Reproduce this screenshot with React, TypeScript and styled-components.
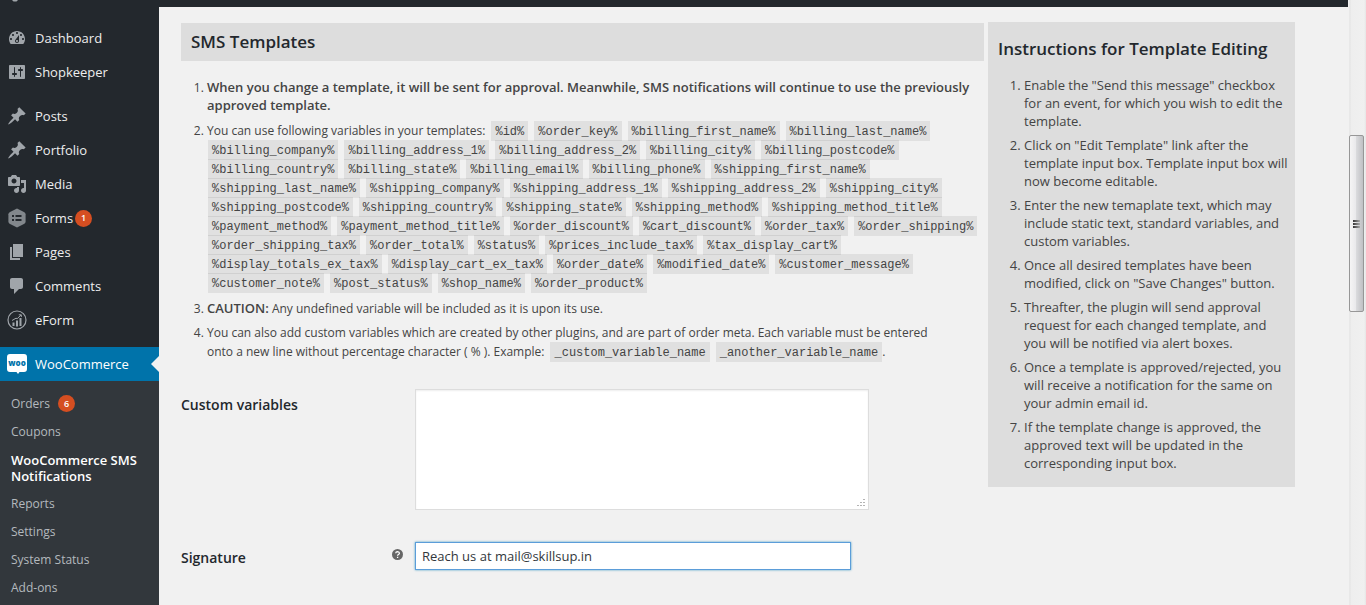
import React from "react";
import styled, { createGlobalStyle } from "styled-components";

const GlobalStyle = createGlobalStyle`
  * { box-sizing: border-box; }
  body {
    margin: 0;
    background: #f1f1f1;
    color: #444;
    font-family: "Open Sans", "Noto Sans", sans-serif;
    font-size: 13px;
    line-height: 18px;
  }
`;

const Page = styled.div`
  display: flex;
  height: 100vh;
  overflow: hidden;
`;

const Sidebar = styled.nav`
  flex: none;
  width: 159px;
  padding-top: 21px;
  background: #23282d;
  position: relative;
`;

const ClippedIcon = styled.svg`
  position: absolute;
  top: 0;
  left: 12px;
`;

const Menu = styled.ul`
  list-style: none;
  margin: 0 0 10px;
  padding: 0;
`;

const MenuLink = styled.a<{ $current?: boolean }>`
  display: flex;
  align-items: center;
  height: 34px;
  padding-left: 7px;
  gap: 8px;
  position: relative;
  font-size: 13px;
  text-decoration: none;
  color: ${(p) => (p.$current ? "#fff" : "#eee")};
  background: ${(p) => (p.$current ? "#0073aa" : "transparent")};
`;

const Arrow = styled.span`
  position: absolute;
  right: 0;
  top: 9px;
  border: 8px solid transparent;
  border-left-width: 0;
  border-right-color: #f1f1f1;
`;

const Badge = styled.span<{ $spaced?: boolean }>`
  display: inline-flex;
  align-items: center;
  justify-content: center;
  width: 17px;
  height: 17px;
  margin-left: ${(p) => (p.$spaced ? "8px" : "-6px")};
  border-radius: 50%;
  background: #d54e21;
  color: #fff;
  font-size: 9px;
  font-weight: 600;
`;

const SubMenu = styled.ul`
  list-style: none;
  margin: -10px 0 0;
  padding: 8px 0 40px;
  background: #32373c;
`;

const SubLink = styled.a<{ $current?: boolean }>`
  display: flex;
  align-items: center;
  padding: 6px 12px 6px 11px;
  font-size: ${(p) => (p.$current ? "13px" : "12px")};
  line-height: 16px;
  text-decoration: none;
  font-weight: ${(p) => (p.$current ? 600 : 400)};
  color: ${(p) => (p.$current ? "#fff" : "#b4b9be")};
`;

const Body = styled.div`
  flex: 1;
  min-width: 0;
`;

const AdminBar = styled.header`
  height: 7px;
  background: #23282d;
`;

const Content = styled.main`
  display: grid;
  grid-template-columns: minmax(0, 1fr) 307px;
  gap: 4px;
  align-items: start;
  padding: 15px 53px 0 22px;
`;

const Templates = styled.section`
  padding-top: 1px;
`;

const Title = styled.h2`
  margin: 0;
  color: #23282d;
  font-size: 17px;
  line-height: 18px;
  font-weight: 600;
`;

const SectionTitle = styled(Title)`
  padding: 10px;
  background: #ddd;
`;

const NumberedList = styled.ol`
  margin: 18px 0 0;
  padding: 0 0 0 26px;

  li { margin-bottom: 6px; }
`;

const Notes = styled(NumberedList)`
  font-size: 12px;

  strong {
    font-size: 13px;
    font-weight: 600;
    line-height: 16px;
  }
`;

const CodeLine = styled.span`
  display: flex;
  align-items: center;
  gap: 6px;
  height: 19px;
  white-space: nowrap;
`;

const Code = styled.code`
  display: inline-block;
  flex: none;
  height: 20px;
  padding: 2px 4px 0;
  background: rgba(0, 0, 0, 0.07);
  font-family: "Liberation Mono", monospace;
  font-size: 12px;
`;

const CodeBlock = styled.div`
  padding: 0 0 2px 1px;
`;

const Field = styled.div`
  display: grid;
  grid-template-columns: 234px minmax(0, 1fr);
  align-items: start;
`;

const FieldHead = styled.div`
  display: flex;
  justify-content: space-between;
  padding: 7px 12px 0 0;
  color: #23282d;
`;

const FieldLabel = styled.label`
  font-size: 14px;
  font-weight: 600;
`;

const TextArea = styled.textarea`
  width: 454px;
  max-width: 100%;
  height: 121px;
  border: 1px solid #ddd;
  background: #fff;
  box-shadow: inset 0 1px 2px rgba(0, 0, 0, 0.07);

  &::-webkit-resizer {
    background-color: #fff;
    background-image:
      linear-gradient(#b4b4b4, #b4b4b4), linear-gradient(#b4b4b4, #b4b4b4), linear-gradient(#b4b4b4, #b4b4b4),
      linear-gradient(#b4b4b4, #b4b4b4), linear-gradient(#b4b4b4, #b4b4b4), linear-gradient(#b4b4b4, #b4b4b4);
    background-repeat: no-repeat;
    background-size: 2px 1px;
    background-position:
      right 3px bottom 3px, right 3px bottom 6px, right 3px bottom 9px,
      right 6px bottom 3px, right 6px bottom 6px, right 9px bottom 3px;
  }
`;

const TextInput = styled.input`
  width: 436px;
  max-width: 100%;
  height: 28px;
  padding: 3px 6px;
  border: 1px solid #5b9dd9;
  background: #fff;
  box-shadow: 0 0 2px rgba(30, 140, 190, 0.8);
  color: #32373c;
  font: inherit;
  outline: none;
`;

const Form = styled.form`
  display: grid;
  gap: 32px;
  margin-top: 28px;
`;

const Instructions = styled.aside`
  padding: 18px 4px 9px 10px;
  background: #ddd;
`;

const Scrollbar = styled.div`
  flex: none;
  width: 18px;
  padding: 135px 2px 0 1px;
  background: linear-gradient(to right, #f6f6f6 0, #e3e3e3 2px, #eeeeee 3px, #f0f0f0 16px, #e6e6e6 18px);
`;

const Thumb = styled.div`
  display: flex;
  flex-direction: column;
  align-items: center;
  justify-content: center;
  gap: 1px;
  height: 177px;
  border: 1px solid #979797;
  border-radius: 2px;
  background: linear-gradient(to right, #f5f5f5 0, #e9e9eb 45%, #d9dadc 50%, #c0c0c4 100%);
`;

const Grip = styled.span`
  width: 7px;
  height: 2px;
  background: linear-gradient(to right, #333, #aaa);
`;

const DASH = {
  dashboard:
    "M3.76 16h12.48c1.1-1.37 1.76-3.11 1.76-5 0-4.42-3.58-8-8-8s-8 3.58-8 8c0 1.89.66 3.63 1.76 5zM10 4c.55 0 1 .45 1 1s-.45 1-1 1-1-.45-1-1 .45-1 1-1zM6 6c.55 0 1 .45 1 1s-.45 1-1 1-1-.45-1-1 .45-1 1-1zm8 0c.55 0 1 .45 1 1s-.45 1-1 1-1-.45-1-1 .45-1 1-1zm-5.37 5.55L12 7v6c0 1.1-.9 2-2 2s-2-.9-2-2c0-.57.24-1.08.63-1.45zM4 10c.55 0 1 .45 1 1s-.45 1-1 1-1-.45-1-1 .45-1 1-1zm12 0c.55 0 1 .45 1 1s-.45 1-1 1-1-.45-1-1 .45-1 1-1zm-5 3c0-.55-.45-1-1-1s-1 .45-1 1 .45 1 1 1 1-.45 1-1z",
  settings:
    "M18 16V4c0-.55-.45-1-1-1H3c-.55 0-1 .45-1 1v12c0 .55.45 1 1 1h14c.55 0 1-.45 1-1zM8 11h1c.55 0 1 .45 1 1s-.45 1-1 1H8v1.5c0 .28-.22.5-.5.5s-.5-.22-.5-.5V13H6c-.55 0-1-.45-1-1s.45-1 1-1h1V5.5c0-.28.22-.5.5-.5s.5.22.5.5V11zm5-2h-1c-.55 0-1-.45-1-1s.45-1 1-1h1V5.5c0-.28.22-.5.5-.5s.5.22.5.5V7h1c.55 0 1 .45 1 1s-.45 1-1 1h-1v5.5c0 .28-.22.5-.5.5s-.5-.22-.5-.5V9z",
  pin: "M10.44 3.02l1.82-1.82 6.36 6.35-1.83 1.82c-1.05-.68-2.48-.57-3.41.36l-.75.75c-.92.93-1.04 2.35-.35 3.41l-1.83 1.82-2.41-2.41-2.8 2.79c-.42.42-3.38 2.71-3.8 2.29s1.86-3.39 2.28-3.81l2.79-2.79L4.1 9.36l1.83-1.82c1.05.69 2.48.57 3.4-.36l.75-.75c.93-.92 1.05-2.35.36-3.41z",
  media:
    "M13 11V4c0-.55-.45-1-1-1h-1.67L9 1H5L3.67 3H2c-.55 0-1 .45-1 1v7c0 .55.45 1 1 1h10c.55 0 1-.45 1-1zM7 4.5c1.38 0 2.5 1.12 2.5 2.5S8.38 9.5 7 9.5 4.5 8.38 4.5 7 5.62 4.5 7 4.5zM14 6h5v10.5c0 1.38-1.12 2.5-2.5 2.5S14 17.88 14 16.5s1.12-2.5 2.5-2.5c.17 0 .34.02.5.05V9h-3V6zm-4 8.05V13h2v3.5c0 1.38-1.12 2.5-2.5 2.5S7 17.88 7 16.5 8.12 14 9.5 14c.17 0 .34.02.5.05z",
  page: "M6 15V2h10v13H6zm-1 1h8v2H3V5h2v11z",
  comment: "M5 2h9c1.1 0 2 .9 2 2v7c0 1.1-.9 2-2 2h-2l-5 5v-5H5c-1.1 0-2-.9-2-2V4c0-1.1.9-2 2-2z",
};

const Dashicon = ({ name }: { name: keyof typeof DASH }) => (
  <svg width="20" height="20" viewBox="0 0 20 20" fill="#a0a5aa" fillRule="evenodd" aria-hidden="true">
    <path d={DASH[name]} />
  </svg>
);

const FormsIcon = () => (
  <svg width="20" height="20" viewBox="0 0 20 20" aria-hidden="true">
    <path d="M10 0.5l7.4 3.8q1.2.8 1.2 2v7.4q0 1.2-1.2 2L10 19.5l-7.4-3.8q-1.2-.8-1.2-2V6.3q0-1.2 1.2-2z" fill="#82878c" />
    <path d="M5 7h2v2H5zM8.5 7h6v2h-6zM5 11h2v2H5zM8.5 11h6v2h-6z" fill="#23282d" />
  </svg>
);

const EFormIcon = () => (
  <svg width="20" height="20" viewBox="0 0 20 20" fill="none" aria-hidden="true">
    <circle cx="10" cy="10" r="9" stroke="#a0a5aa" strokeWidth="1.2" />
    <path d="M5.5 12.5h2V16h-2zM9 10.5h2V16.5H9zM12.5 8h2v8h-2z" fill="#a0a5aa" />
    <path d="M5 10.5l4-2.3 1.2.5L14 5M11.8 4.8H14.3V7" stroke="#a0a5aa" />
  </svg>
);

const WooIcon = () => (
  <svg width="20" height="20" viewBox="0 0 20 20" aria-hidden="true">
    <path d="M3 0h14q3 0 3 3v12q0 3-3 3h-4.5l-1.5 2-1.5-2H3q-3 0-3-3V3q0-3 3-3z" fill="#fff" />
    <text x="10" y="12" textAnchor="middle" fontSize="8" fontWeight="800" fill="#0073aa">
      woo
    </text>
  </svg>
);

const HelpIcon = () => (
  <svg width="11" height="11" viewBox="0 0 11 11" role="img" aria-label="Help">
    <circle cx="5.5" cy="5.5" r="5.5" fill="#666" />
    <path d="M3.7 4.3q.1-1.7 1.9-1.7 1.8.1 1.8 1.6 0 .8-1 1.3-.8.4-.8 1.2M5.6 7.7v1.3" stroke="#fff" strokeWidth="1.3" fill="none" />
  </svg>
);

const MAIN_MENU: { label: string; icon: React.ReactNode; count?: number }[][] = [
  [
    { label: "Dashboard", icon: <Dashicon name="dashboard" /> },
    { label: "Shopkeeper", icon: <Dashicon name="settings" /> },
  ],
  [
    { label: "Posts", icon: <Dashicon name="pin" /> },
    { label: "Portfolio", icon: <Dashicon name="pin" /> },
    { label: "Media", icon: <Dashicon name="media" /> },
    { label: "Forms", icon: <FormsIcon />, count: 1 },
    { label: "Pages", icon: <Dashicon name="page" /> },
    { label: "Comments", icon: <Dashicon name="comment" /> },
    { label: "eForm", icon: <EFormIcon /> },
  ],
];

const SUB_MENU: { label: string; count?: number; current?: boolean }[] = [
  { label: "Orders", count: 6 },
  { label: "Coupons" },
  { label: "WooCommerce SMS Notifications", current: true },
  { label: "Reports" },
  { label: "Settings" },
  { label: "System Status" },
  { label: "Add-ons" },
];

const FIRST_VARIABLES = ["id", "order_key", "billing_first_name", "billing_last_name"];

const VARIABLES = [
  ["billing_company", "billing_address_1", "billing_address_2", "billing_city", "billing_postcode"],
  ["billing_country", "billing_state", "billing_email", "billing_phone", "shipping_first_name"],
  ["shipping_last_name", "shipping_company", "shipping_address_1", "shipping_address_2", "shipping_city"],
  ["shipping_postcode", "shipping_country", "shipping_state", "shipping_method", "shipping_method_title"],
  ["payment_method", "payment_method_title", "order_discount", "cart_discount", "order_tax", "order_shipping"],
  ["order_shipping_tax", "order_total", "status", "prices_include_tax", "tax_display_cart"],
  ["display_totals_ex_tax", "display_cart_ex_tax", "order_date", "modified_date", "customer_message"],
  ["customer_note", "post_status", "shop_name", "order_product"],
];

const STEPS = [
  'Enable the "Send this message" checkbox for an event, for which you wish to edit the template.',
  'Click on "Edit Template" link after the template input box. Template input box will now become editable.',
  "Enter the new temaplate text, which may include static text, standard variables, and custom variables.",
  'Once all desired templates have been modified, click on "Save Changes" button.',
  "Threafter, the plugin will send approval request for each changed template, and you will be notified via alert boxes.",
  "Once a template is approved/rejected, you will receive a notification for the same on your admin email id.",
  "If the template change is approved, the approved text will be updated in the corresponding input box.",
];

export default function App() {
  return (
    <>
      <GlobalStyle />
      <Page>
        <Sidebar>
          <ClippedIcon width="6" height="2" viewBox="0 0 6 2" aria-hidden="true">
            <path d="M0 0h6L4.5 1.5h-3z" fill="#a0a5aa" />
          </ClippedIcon>
          {MAIN_MENU.map((group, i) => (
            <Menu key={i}>
              {group.map((item) => (
                <li key={item.label}>
                  <MenuLink href="#">
                    {item.icon}
                    {item.label}
                    {item.count && <Badge>{item.count}</Badge>}
                  </MenuLink>
                </li>
              ))}
            </Menu>
          ))}
          <Menu>
            <li>
              <MenuLink href="#" $current>
                <WooIcon />
                WooCommerce
                <Arrow />
              </MenuLink>
            </li>
          </Menu>
          <SubMenu>
            {SUB_MENU.map((item) => (
              <li key={item.label}>
                <SubLink href="#" $current={item.current}>
                  {item.label}
                  {item.count && <Badge $spaced>{item.count}</Badge>}
                </SubLink>
              </li>
            ))}
          </SubMenu>
        </Sidebar>
        <Body>
          <AdminBar />
          <Content>
            <Templates>
              <SectionTitle>SMS Templates</SectionTitle>
              <Notes>
                <li>
                  <strong>
                    When you change a template, it will be sent for approval. Meanwhile, SMS notifications will
                    continue to use the previously approved template.
                  </strong>
                </li>
                <li>
                  <CodeLine>
                    You can use following variables in your templates:
                    {FIRST_VARIABLES.map((v) => (
                      <Code key={v}>%{v}%</Code>
                    ))}
                  </CodeLine>
                  <CodeBlock>
                    {VARIABLES.map((line) => (
                      <CodeLine key={line[0]}>
                        {line.map((v) => (
                          <Code key={v}>%{v}%</Code>
                        ))}
                      </CodeLine>
                    ))}
                  </CodeBlock>
                </li>
                <li>
                  <strong>CAUTION:</strong> Any undefined variable will be included as it is upon its use.
                </li>
                <li>
                  You can also add custom variables which are created by other plugins, and are part of order meta.
                  Each variable must be entered
                  <CodeLine>
                    onto a new line without percentage character ( % ). Example:
                    <Code>_custom_variable_name</Code>
                    <span>
                      <Code>_another_variable_name</Code>.
                    </span>
                  </CodeLine>
                </li>
              </Notes>
              <Form>
                <Field>
                  <FieldHead>
                    <FieldLabel htmlFor="custom-variables">Custom variables</FieldLabel>
                  </FieldHead>
                  <TextArea id="custom-variables" />
                </Field>
                <Field>
                  <FieldHead>
                    <FieldLabel htmlFor="signature">Signature</FieldLabel>
                    <HelpIcon />
                  </FieldHead>
                  <TextInput id="signature" type="text" defaultValue="Reach us at mail@skillsup.in" />
                </Field>
              </Form>
            </Templates>
            <Instructions>
              <Title>Instructions for Template Editing</Title>
              <NumberedList>
                {STEPS.map((step) => (
                  <li key={step}>{step}</li>
                ))}
              </NumberedList>
            </Instructions>
          </Content>
        </Body>
        <Scrollbar aria-hidden="true">
          <Thumb>
            <Grip />
            <Grip />
            <Grip />
          </Thumb>
        </Scrollbar>
      </Page>
    </>
  );
}
